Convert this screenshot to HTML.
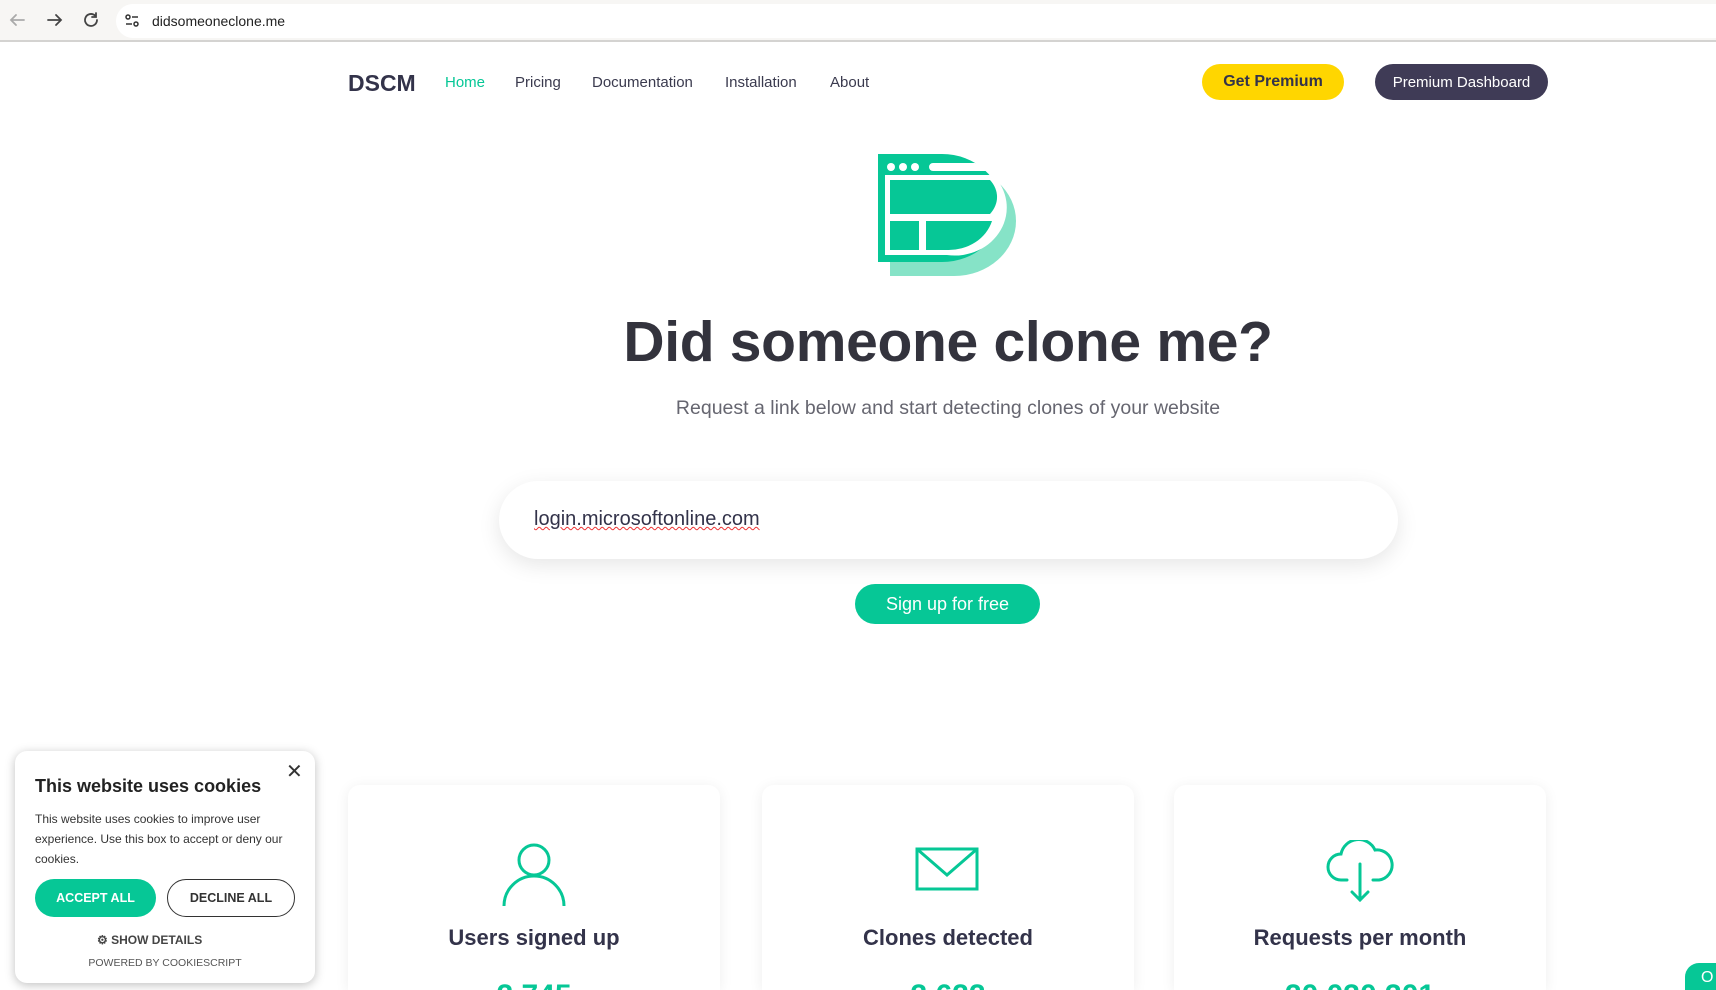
<!DOCTYPE html>
<html style="width:1716px;height:990px;overflow:hidden"><head><meta charset="utf-8"><style>
*{margin:0;padding:0;box-sizing:border-box}
body{width:1716px;height:990px;overflow:hidden;background:#fff;font-family:"Liberation Sans",sans-serif;color:#33334a;position:relative}
#wrap{position:absolute;left:0;top:0;width:1716px;height:990px;overflow:hidden}
.bar{position:absolute;left:0;top:0;width:1716px;height:42px;background:#f7f6f4;border-bottom:2px solid #d4d3d1}
.url{position:absolute;left:116px;top:4px;right:0;height:34px;background:#fff;border-radius:17px 0 0 17px}
.url span{position:absolute;left:36px;top:9px;font-size:14px;color:#222}
.abs{position:absolute}
.nav a{position:absolute;top:74px;font-size:15px;color:#3a3a4e;text-decoration:none}
.btn{position:absolute;border-radius:18px;display:flex;align-items:center;justify-content:center;font-size:15px}
.card{position:absolute;top:785px;width:372px;height:205px;overflow:hidden;background:#fff;border-radius:12px 12px 0 0;box-shadow:0 2px 14px rgba(0,0,0,.07);text-align:center}
.card h3{position:absolute;top:140px;width:100%;font-size:22px;font-weight:600;color:#33334a}
.card .n{position:absolute;top:194px;width:100%;font-size:30px;font-weight:700;color:#06c796}
</style></head><body><div id="wrap">
<div class="bar">
<svg class="abs" style="left:8px;top:11px" width="90" height="20" viewBox="0 0 90 20" fill="none" stroke-width="1.8" stroke-linecap="round"><path d="M16 9H3M8 4L3 9l5 5" stroke="#aaa"/><path d="M40 9h13M48 4l5 5-5 5" stroke="#444"/><path d="M89 9a6 6 0 1 1-2-4.5M88 2v4h-4" stroke="#444"/></svg>
<div class="url"><svg class="abs" style="left:8px;top:9px" width="16" height="16" viewBox="0 0 16 16" fill="none" stroke="#333" stroke-width="1.5"><circle cx="4" cy="4" r="2"/><path d="M8 4h6M2 11h6"/><circle cx="12" cy="11" r="2"/></svg><span>didsomeoneclone.me</span></div>
</div>
<div class="abs" style="left:348px;top:70px;font-size:23px;font-weight:700;color:#33334a">DSCM</div>
<div class="nav"><a style="left:445px;color:#06c796">Home</a><a style="left:515px">Pricing</a><a style="left:592px">Documentation</a><a style="left:725px">Installation</a><a style="left:830px">About</a></div>
<div class="btn" style="left:1202px;top:64px;width:142px;height:36px;background:#ffd600;color:#33334a;font-weight:700;font-size:16px">Get Premium</div>
<div class="btn" style="left:1375px;top:64px;width:173px;height:36px;background:#3f3b56;color:#fff">Premium Dashboard</div>
<svg class="abs" style="left:876px;top:152px" width="144" height="124" viewBox="0 0 144 124">
<path d="M14 14h64a62 55 0 0 1 0 110H14z" fill="#86e3c7"/>
<path d="M2 2h64a60 54 0 0 1 0 108H2z" fill="#06c796"/>
<path d="M9 23h108a52 48 0 0 1 -46 80H9z" fill="#fff"/>
<path d="M14 28h100a40 30 0 0 1 0 34H14z" fill="#06c796"/>
<rect x="14" y="69" width="29" height="29" fill="#06c796"/>
<path d="M50 69h66a45 40 0 0 1-45 29H50z" fill="#06c796"/>
<circle cx="15" cy="15" r="4" fill="#fff"/><circle cx="27" cy="15" r="4" fill="#fff"/><circle cx="39" cy="15" r="4" fill="#fff"/>
<path d="M57 11h42a30 20 0 0 1 15 8H57a4 4 0 0 1 0-8z" fill="#fff"/>
</svg>
<div class="abs" style="left:0;width:1896px;top:309px;text-align:center;font-size:57px;font-weight:700;color:#33333d;letter-spacing:-0.3px">Did someone clone me?</div>
<div class="abs" style="left:0;width:1896px;top:397px;text-align:center;font-size:19.5px;color:#666670">Request a link below and start detecting clones of your website</div>
<div class="abs" style="left:499px;top:481px;width:899px;height:78px;border-radius:39px;background:#fff;box-shadow:0 6px 22px rgba(0,0,0,.10)"></div>
<div class="abs" style="left:534px;top:508px;font-size:20px;color:#33334a;text-decoration:underline wavy #e33;text-decoration-thickness:1px">login.microsoftonline.com</div>
<div class="btn" style="left:855px;top:584px;width:185px;height:40px;border-radius:20px;background:#06c796;color:#fff;font-size:18px">Sign up for free</div>
<div class="card" style="left:348px">
<svg class="abs" style="left:153px;top:55px" width="66" height="66" viewBox="0 0 66 66" fill="none" stroke="#06c796" stroke-width="3"><circle cx="33" cy="20" r="15"/><path d="M3 66a30 30 0 0 1 60 0"/></svg>
<h3>Users signed up</h3><div class="n">2,745</div></div>
<div class="card" style="left:762px">
<svg class="abs" style="left:153px;top:62px" width="64" height="44" viewBox="0 0 64 44" fill="none" stroke="#06c796" stroke-width="3"><rect x="2" y="2" width="60" height="40"/><path d="M2 2l30 26 30-26"/></svg>
<h3>Clones detected</h3><div class="n">3,622</div></div>
<div class="card" style="left:1174px">
<svg class="abs" style="left:151px;top:55px" width="70" height="62" viewBox="0 0 70 62" fill="none" stroke="#06c796" stroke-width="3" stroke-linecap="round"><path d="M22 40H16a13 13 0 0 1 0-26 18 18 0 0 1 34-4 14 14 0 0 1 4 30h-6"/><path d="M35 24v36M27 52l8 8 8-8"/></svg>
<h3>Requests per month</h3><div class="n">20,030,301</div></div>
<div class="abs" style="left:15px;top:751px;width:300px;height:232px;background:#fff;border-radius:12px;box-shadow:0 2px 10px rgba(0,0,0,.25)">
<div class="abs" style="left:271px;top:8px;font-size:20px;color:#333">✕</div>
<div class="abs" style="left:20px;top:25px;font-size:18px;font-weight:700;color:#222">This website uses cookies</div>
<div class="abs" style="left:20px;top:58px;width:250px;font-size:12px;line-height:20px;color:#333">This website uses cookies to improve user experience. Use this box to accept or deny our cookies.</div>
<div class="btn" style="left:20px;top:128px;width:121px;height:38px;border-radius:19px;background:#06c796;color:#fff;font-size:12.5px;font-weight:700">ACCEPT ALL</div>
<div class="btn" style="left:152px;top:128px;width:128px;height:38px;border-radius:19px;border:1.5px solid #333;color:#333;font-size:12.5px;font-weight:700">DECLINE ALL</div>
<div class="abs" style="left:82px;top:182px;font-size:12px;font-weight:700;color:#444">⚙ SHOW DETAILS</div>
<div class="abs" style="left:0;width:300px;top:206px;text-align:center;font-size:10.5px;color:#555">POWERED BY COOKIESCRIPT</div>
</div>
<div class="abs" style="left:1685px;top:963px;width:40px;height:27px;border-radius:14px 0 0 0;background:#06c796;color:#fff;font-size:16px;padding:6px 0 0 16px;overflow:hidden">O</div>
</div></body></html>
